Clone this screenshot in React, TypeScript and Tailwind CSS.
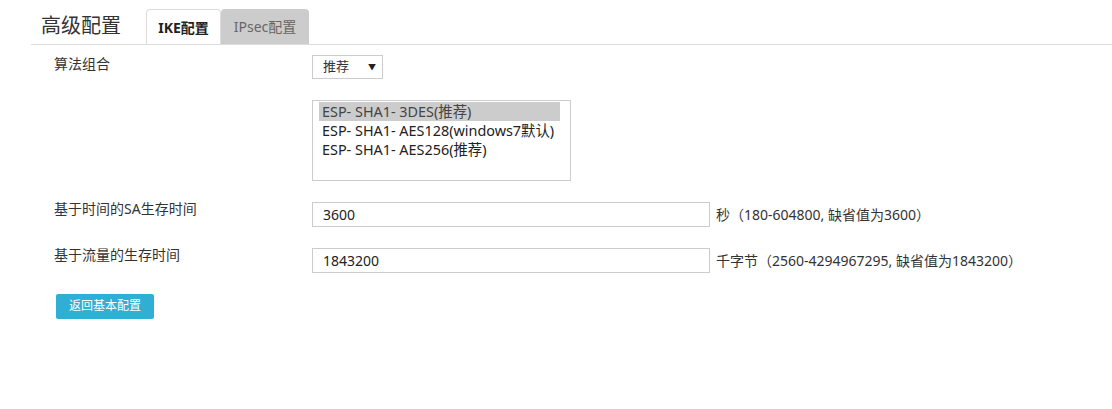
import React from "react";

const options = [
  "ESP- SHA1- 3DES(推荐)",
  "ESP- SHA1- AES128(windows7默认)",
  "ESP- SHA1- AES256(推荐)",
];

export default function App() {
  return (
    <div
      className="min-h-[409px] bg-white pl-[31px] text-[#333]"
      style={{ fontFamily: '"Noto Sans", "Noto Sans CJK SC", sans-serif' }}
    >
      <div className="flex h-[45px] items-end border-b border-[#ddd]">
        <div className="pb-[4px] pl-[10px] text-[20px] leading-[28px]">高级配置</div>
        <div className="ml-[25px] flex">
          <div className="flex h-[35px] w-[75px] items-center justify-center rounded-t-[4px] border border-b-0 border-[#ddd] bg-white text-[14px] font-bold text-[#222]">
            IKE配置
          </div>
          <div className="flex h-[35px] w-[88px] items-center justify-center rounded-t-[4px] bg-[#ccc] text-[14px] text-[#666]">
            IPsec配置
          </div>
        </div>
      </div>

      <div className="grid grid-cols-[258px_1fr] pl-[23px] text-[14px]">
        <div className="mt-[9px] leading-[20px]">算法组合</div>
        <div className="mt-[10px]">
          <div className="flex h-[24px] w-[71px] items-center justify-between border border-[#ccc] pl-[10px] pr-[6px] text-[13px]">
            <span>推荐</span>
            <span className="text-[8px] text-[#222]">▼</span>
          </div>
        </div>

        <div />
        <div className="mt-[21px]">
          <div className="h-[81px] w-[259px] border border-[#ccc] pl-[6px] pr-[10px] pt-[1px]">
            {options.map((o, i) => (
              <div
                key={o}
                className={
                  "h-[19px] whitespace-nowrap pl-[3px] text-[14.4px] leading-[19px] " +
                  (i === 0 ? "bg-[#ccc] text-[#444]" : "text-[#222]")
                }
              >
                {o}
              </div>
            ))}
          </div>
        </div>

        <div className="mt-[18px] leading-[20px]">基于时间的SA生存时间</div>
        <div className="mt-[21px] flex items-center">
          <input
            defaultValue="3600"
            className="h-[25px] w-[398px] border border-[#ccc] px-[10px] text-[14px] text-[#222] outline-none"
          />
          <span className="ml-[6px] text-[14px]">秒（180-604800, 缺省值为3600）</span>
        </div>

        <div className="mt-[18px] leading-[20px]">基于流量的生存时间</div>
        <div className="mt-[21px] flex items-center">
          <input
            defaultValue="1843200"
            className="h-[25px] w-[398px] border border-[#ccc] px-[10px] text-[14px] text-[#222] outline-none"
          />
          <span className="ml-[6px] text-[14px]">千字节（2560-4294967295, 缺省值为1843200）</span>
        </div>
      </div>

      <div className="pl-[25px] pt-[19px]">
        <button className="h-[25px] w-[98px] rounded-[2px] bg-[#2eafd3] text-[12px] text-white">
          返回基本配置
        </button>
      </div>
    </div>
  );
}
